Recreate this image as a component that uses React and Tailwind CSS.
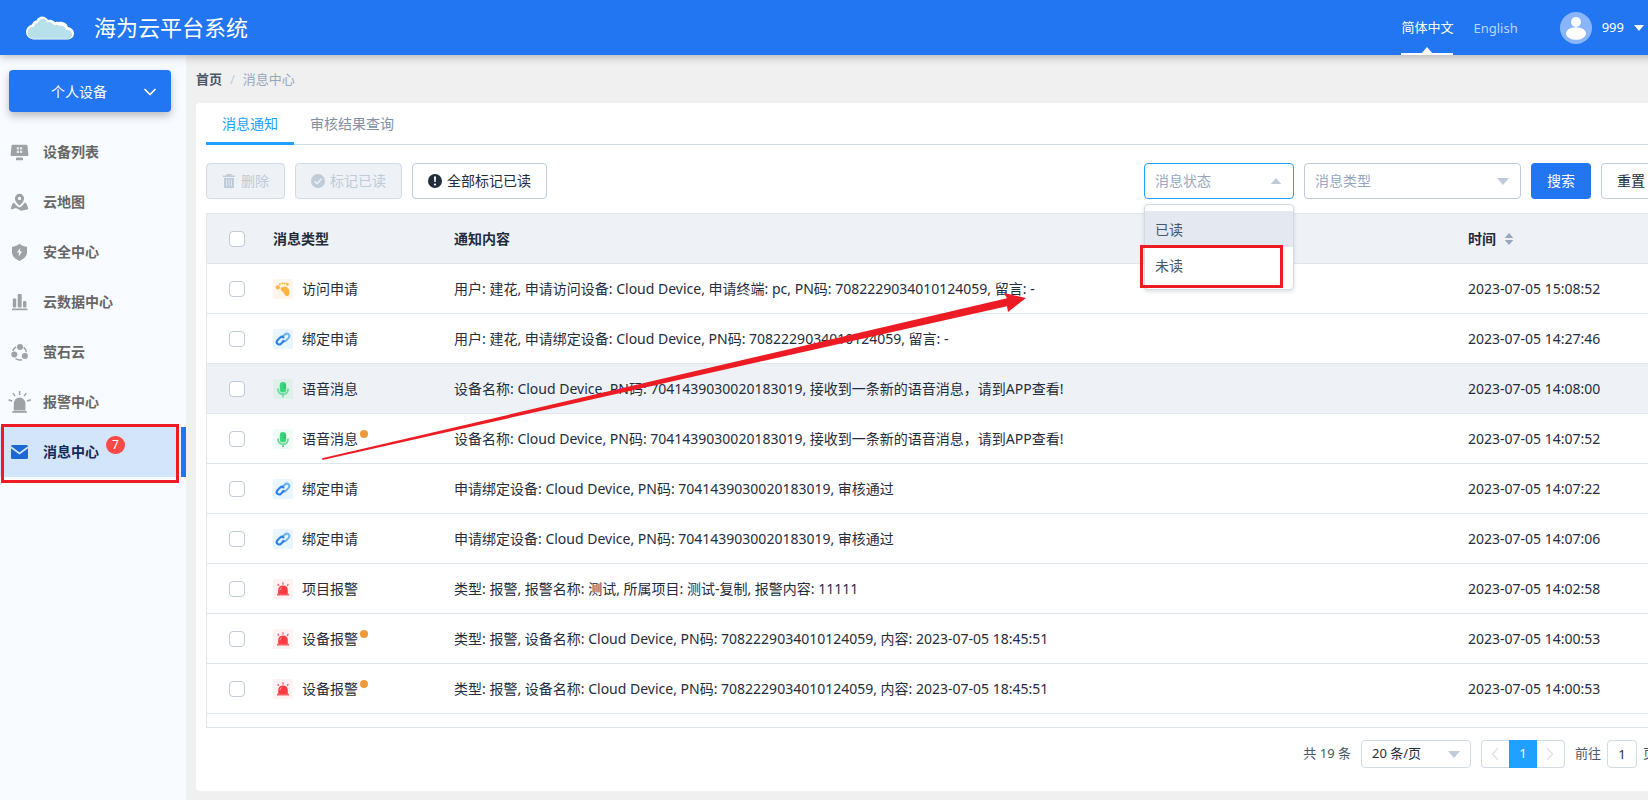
import React from "react";

const NAV = [
  { label: "设备列表", icon: "device" },
  { label: "云地图", icon: "map" },
  { label: "安全中心", icon: "shield" },
  { label: "云数据中心", icon: "chart" },
  { label: "萤石云", icon: "share" },
  { label: "报警中心", icon: "alarm" },
  { label: "消息中心", icon: "mail", active: true, badge: 7 },
];

const VISIT = "访问申请";
const BIND = "绑定申请";
const VOICE = "语音消息";
const PROJECT = "项目报警";
const DEVICE = "设备报警";

const ROWS = [
  { id: 1, type: VISIT, text: "用户: 建花, 申请访问设备: Cloud Device, 申请终端: pc, PN码: 7082229034010124059, 留言: -", time: "2023-07-05 15:08:52" },
  { id: 2, type: BIND, text: "用户: 建花, 申请绑定设备: Cloud Device, PN码: 7082229034010124059, 留言: -", time: "2023-07-05 14:27:46" },
  { id: 3, type: VOICE, text: "设备名称: Cloud Device, PN码: 7041439030020183019, 接收到一条新的语音消息，请到APP查看!", time: "2023-07-05 14:08:00", hover: true },
  { id: 4, type: VOICE, text: "设备名称: Cloud Device, PN码: 7041439030020183019, 接收到一条新的语音消息，请到APP查看!", time: "2023-07-05 14:07:52", unread: true },
  { id: 5, type: BIND, text: "申请绑定设备: Cloud Device, PN码: 7041439030020183019, 审核通过", time: "2023-07-05 14:07:22" },
  { id: 6, type: BIND, text: "申请绑定设备: Cloud Device, PN码: 7041439030020183019, 审核通过", time: "2023-07-05 14:07:06" },
  { id: 7, type: PROJECT, text: "类型: 报警, 报警名称: 测试, 所属项目: 测试-复制, 报警内容: 11111", time: "2023-07-05 14:02:58" },
  { id: 8, type: DEVICE, text: "类型: 报警, 设备名称: Cloud Device, PN码: 7082229034010124059, 内容: 2023-07-05 18:45:51", time: "2023-07-05 14:00:53", unread: true },
  { id: 9, type: DEVICE, text: "类型: 报警, 设备名称: Cloud Device, PN码: 7082229034010124059, 内容: 2023-07-05 18:45:51", time: "2023-07-05 14:00:53", unread: true },
];

function NavIcon({ name }) {
  const common = { viewBox: "0 0 24 24", className: "h-6 w-6 shrink-0", "aria-hidden": true };
  switch (name) {
    case "device":
      return (
        <svg {...common} fill="#a0a1a5">
          <path d="M4.700 4.800h13.600a1.200 1.200 0 0 1 1.200 1.100l.9 8.900a1.200 1.200 0 0 1-1.200 1.300H3.800a1.200 1.200 0 0 1-1.200-1.300l.9-8.900a1.200 1.200 0 0 1 1.200-1.100z" />
          <path d="M9.500 17.600h4c.8 0 1.500.4 1.500 1v1.600H8v-1.600c0-.6.7-1 1.500-1z" />
          <path d="M8.800 7.300h2.200v2.200H8.800zM12 7.300h2.200v2.200H12zM8.800 10.700h2.200v2.200H8.800zM12 10.700h2.200v2.200H12z" fill="#e9ebef" />
        </svg>
      );
    case "map":
      return (
        <svg {...common} fill="#a0a1a5">
          <path fillRule="evenodd" d="M11.500 3.800A4.600 4.600 0 0 0 6.900 8.400c0 3 4.600 7.300 4.600 7.300s4.600-4.300 4.600-7.300a4.600 4.600 0 0 0-4.600-4.600zm0 2.900a1.700 1.700 0 1 1 0 3.400 1.700 1.700 0 0 1 0-3.400z" />
          <path d="M6.200 12.800l-1.700.6L2.900 18c-.3 1 .5 1.700 1.400 1.300l3.600-1.400 4.800 2.500c.5.300 1 .3 1.500.1l5-1c.9-.2 1.200-.8.9-1.600l-1.600-4.400-1.800-.9c-1.200 2.200-3.200 4.100-5.200 5-2-.9-4-2.700-5.300-4.800z" />
        </svg>
      );
    case "shield":
      return (
        <svg {...common}>
          <path d="M11.500 3.800c2 1.700 4.700 2.800 7.500 3v5.700c0 3.700-3 6.400-7.500 8.500-4.500-2.100-7.500-4.800-7.500-8.500V6.800c2.800-.2 5.500-1.300 7.500-3z" fill="#a0a1a5" />
          <path d="M12.300 8l-3.500 4.600h2.300l-.5 4 3.700-5H12z" fill="#f8fbff" />
        </svg>
      );
    case "chart":
      return (
        <svg {...common} fill="#a0a1a5">
          <rect x="4.800" y="8.500" width="3.400" height="9" rx="1" />
          <rect x="9.700" y="4" width="4" height="13.500" rx="1" />
          <rect x="15" y="11" width="3.400" height="6.500" rx="1" />
          <rect x="4" y="18.400" width="15.500" height="1.800" rx=".5" />
        </svg>
      );
    case "share":
      return (
        <svg {...common} fill="#a0a1a5">
          <circle cx="12" cy="7" r="3" />
          <circle cx="6.300" cy="14.600" r="3" />
          <circle cx="16.900" cy="16" r="3" />
          <path d="M8 6.800A7.600 7.600 0 0 0 4.800 11M15.600 7.200a7.600 7.600 0 0 1 2.700 5M7.500 18.700a7.600 7.600 0 0 0 6.500 1" fill="none" stroke="#a0a1a5" strokeWidth="1.500" />
        </svg>
      );
    case "alarm":
      return (
        <svg {...common} fill="#a0a1a5">
          <path d="M11.600 7.500a5.800 5.800 0 0 1 5.800 5.800V20.500H5.800v-7.200a5.800 5.800 0 0 1 5.800-5.800z" />
          <rect x="4.400" y="21" width="14.400" height="1.800" />
          <path d="M11.600 1v4M5 3.200l2 3M18.200 3.200l-2 3M.4 9.800l3.800 1.200M22.800 9.800L19 11" stroke="#a0a1a5" strokeWidth="1.500" />
        </svg>
      );
    default:
      return (
        <svg {...common}>
          <rect x="3" y="5" width="17" height="14" rx="1.500" fill="#1e68d6" />
          <path d="M3 7.200l8.500 6.300L20 7.200" fill="none" stroke="#d2e5fb" strokeWidth="1.700" />
        </svg>
      );
  }
}

function TypeIcon({ type }) {
  if (type === VISIT) {
    return (
      <svg viewBox="0 0 20 20" className="h-5 w-5 shrink-0" aria-hidden="true">
        <rect width="20" height="20" rx="1.500" fill="#fef6ea" />
        <g fill="#fdb441">
          <circle cx="4.800" cy="8.400" r="2.100" />
          <circle cx="6.900" cy="5.300" r="1" />
          <circle cx="9.300" cy="4.600" r="1" />
          <circle cx="11.800" cy="4.500" r="1.100" />
          <circle cx="14.400" cy="5.300" r="1.400" />
          <path d="M8.500 8.300c2.600-1.600 6-.8 7.200 2 1.100 2.600 1.100 6.200-1.400 6.700-2.300.4-2.300-1.900-3.600-3.100-1.700-1.500-4.300-3.900-2.200-5.600z" />
        </g>
      </svg>
    );
  }
  if (type === BIND) {
    return (
      <svg viewBox="0 0 20 20" className="h-5 w-5 shrink-0" aria-hidden="true">
        <rect width="20" height="20" rx="1.500" fill="#e9f6ff" />
        <g fill="none" strokeWidth="2.100" strokeLinecap="round">
          <path d="M9.200 8.300l2.600-2.700c2.700-2.400 6 .6 3.800 3.300l-2.800 2.800c-1 .9-2.200 1-3.200.3" stroke="#6fb1f7" />
          <path d="M10.800 11.900l-2.700 2.700c-2.600 2.300-5.900-.6-3.700-3.300l2.800-2.800c1-.9 2.400-.9 3.300 0" stroke="#2b82ee" />
        </g>
      </svg>
    );
  }
  if (type === VOICE) {
    return (
      <svg viewBox="0 0 20 20" className="h-5 w-5 shrink-0" aria-hidden="true">
        <rect width="20" height="20" rx="1.500" fill="#3bd57c" fillOpacity=".08" />
        <rect x="6.800" y="3" width="6.400" height="10.500" rx="3.200" fill="#3bd57c" />
        <path d="M4.900 9.500c0 3.700 2.200 5.700 5.100 5.700s5.100-2 5.100-5.700M10 15v3.200" fill="none" stroke="#6cdc9b" strokeWidth="1.800" />
        <path d="M10 6.200h3M10 8.500h3" stroke="#2fae62" strokeWidth=".8" />
      </svg>
    );
  }
  return (
    <svg viewBox="0 0 20 20" className="h-5 w-5 shrink-0" aria-hidden="true">
      <rect width="20" height="20" rx="1.500" fill="#fff2f2" />
      <path d="M10 6.500c3 0 4.800 2 4.800 4.600V15H5.200v-3.900C5.200 8.500 7 6.500 10 6.500z" fill="#ff3b42" />
      <rect x="4" y="14.800" width="12" height="1.700" fill="#ff5c62" />
      <path d="M10 3.300v2.400M4.700 4.800l1.100 2M15.300 4.800l-1.100 2" stroke="#ff6b70" strokeWidth="1.400" />
      <path d="M7 11.200c0-1.400.7-2.200 1.900-2.600" fill="none" stroke="#ffc4c6" strokeWidth=".8" />
    </svg>
  );
}

function Caret({ up = false, className = "" }) {
  return (
    <svg viewBox="0 0 12 7" className={className} fill="currentColor" aria-hidden="true">
      <path d={up ? "M0 7L6 0l6 7z" : "M0 0l6 7 6-7z"} />
    </svg>
  );
}

function Checkbox({ label }) {
  return (
    <input
      type="checkbox"
      aria-label={label}
      className="block h-4 w-4 appearance-none rounded border border-[#bfcbd9] bg-white checked:bg-[#20a0ff]"
    />
  );
}

function Header() {
  return (
    <header className="relative z-10 flex h-[55px] shrink-0 items-center bg-[#2276f2] pl-[26px] pr-[37px] text-white shadow-[0_2px_8px_rgba(0,0,0,0.25)]">
      <svg viewBox="0 0 48 24" className="h-6 w-12" aria-hidden="true">
        <path d="M7.500 23.500A7.500 7.500 0 0 1 0 16.200C0 12.200 2.800 9.500 6 8.500 7 5.800 8.500 4.800 10.500 4.500 12 1.500 14 .5 16 .5c2.600 0 4.700 1.300 6 3.500 2.800-.7 5.500 0 7 2.300 1.500-.6 2.700-.6 4 0 0-.5 3-1 5 .2 2 1 3.500 2.300 3.800 4.600 3.700.7 6.200 2.900 6.200 6.400a6 6 0 0 1-6 6z" fill="#fff" />
        <path d="M8 22.800c-3.800 0-6.200-2.500-6.200-6 0-3.300 2.600-5.800 6-6 .6-2.700 2-3.800 4.200-3.900.9-2.600 2.400-4 4.800-4 2.300 0 4 1.400 4.800 3.600 3-.9 5.700.5 6.600 3 1.800-1.200 3.600-1 5 .5 3.300-1 6.200.8 6.600 3.700 3.500.2 6.400 2 6.400 4.900 0 2.600-2 4.200-4.700 4.200z" fill="#b8e0ea" />
      </svg>
      <h1 className="ml-5 text-[22px]">海为云平台系统</h1>
      <nav className="ml-auto flex h-full items-center gap-5 text-[13px]" aria-label="语言">
        <a href="#zh" className="relative flex h-full items-center border-b-2 border-white pt-[2px]">
          简体中文
          <Caret up className="absolute bottom-0 left-5 h-[6px] w-3" />
        </a>
        <a href="#en" className="pt-[2px] text-[#bdd6fb]">English</a>
      </nav>
      <button type="button" className="ml-[42px] flex items-center text-[13px]">
        <svg viewBox="0 0 32 32" className="mr-[10px] h-8 w-8" aria-hidden="true">
          <circle cx="16" cy="16" r="16" fill="#8ab5fb" />
          <circle cx="16" cy="10" r="5" fill="#fff" />
          <ellipse cx="16" cy="21.500" rx="10" ry="6.300" fill="#fff" />
        </svg>
        999
        <Caret className="ml-[10px] h-[6px] w-[10px]" />
      </button>
    </header>
  );
}

function Sidebar() {
  return (
    <aside className="w-[186px] shrink-0 bg-[#f8fbff]">
      <div className="pl-[9px] pr-[15px] pt-[15px]">
        <button type="button" className="flex h-[42px] w-full items-center rounded bg-[#2276f2] pl-[42px] pr-[14px] pt-[2px] text-sm text-white shadow-[0_4px_8px_rgba(0,0,0,0.25)]">
          个人设备
          <svg viewBox="0 0 14 14" className="ml-auto h-[14px] w-[14px]" fill="none" stroke="currentColor" strokeWidth="1.600" aria-hidden="true">
            <path d="M1.500 4L7 9.500 12.500 4" />
          </svg>
        </button>
      </div>
      <nav className="mt-[15px]" aria-label="主导航">
        {NAV.map((item) => (
          <a
            key={item.label}
            href={"#" + item.icon}
            className={"relative flex h-[50px] gap-[2px] text-sm font-bold " + (item.active ? "text-[#14285a]" : "text-[#666]")}
          >
            <span className={"flex flex-1 items-center pl-2 " + (item.active ? "bg-[#d2e5fb]" : "")}>
              <NavIcon name={item.icon} />
              <span className="ml-[11px]">{item.label}</span>
              {item.badge && (
                <span className="mb-[14px] ml-[7px] flex h-[18px] w-[19px] items-center justify-center rounded-full bg-[#ff4949] text-xs font-normal text-white">
                  {item.badge}
                </span>
              )}
            </span>
            {item.active && <span className="w-[5px] bg-[#2276f2]" />}
            {item.active && <span className="absolute -bottom-[6px] -top-[3px] left-px w-[178px] border-[3px] border-[#ed1c24]" />}
          </a>
        ))}
      </nav>
    </aside>
  );
}

function Toolbar() {
  return (
    <div className="mt-[18px] flex items-center gap-[10px] text-sm text-[#1f2d3d]">
      <button type="button" disabled className="flex h-9 items-center gap-[5px] rounded border border-[#d1dbe5] bg-[#eef1f6] px-[15px] text-[#bfcbd9]">
        <svg viewBox="0 0 14 16" className="h-4 w-[14px]" fill="currentColor" aria-hidden="true">
          <path d="M4.500 1h5v1.500H13V4H1V2.500h3.500z" />
          <path fillRule="evenodd" d="M2 5h10v9a1 1 0 0 1-1 1H3a1 1 0 0 1-1-1zm2.200 1.500v6.800h.7V6.500zm2.450 0v6.800h.7V6.500zm2.450 0v6.800h.7V6.500z" />
        </svg>
        删除
      </button>
      <button type="button" disabled className="flex h-9 items-center gap-[5px] rounded border border-[#d1dbe5] bg-[#eef1f6] px-[15px] text-[#bfcbd9]">
        <svg viewBox="0 0 14 14" className="h-[14px] w-[14px]" aria-hidden="true">
          <circle cx="7" cy="7" r="7" fill="currentColor" />
          <path d="M3.500 7.200l2.500 2.500 4.500-5" fill="none" stroke="#eef1f6" strokeWidth="1.500" />
        </svg>
        标记已读
      </button>
      <button type="button" className="flex h-9 items-center gap-[5px] rounded border border-[#c0ccda] bg-white px-[15px]">
        <svg viewBox="0 0 14 14" className="h-[14px] w-[14px]" aria-hidden="true">
          <circle cx="7" cy="7" r="7" fill="currentColor" />
          <path d="M6 2.500h2L7.700 8H6.300z" fill="#fff" />
          <circle cx="7" cy="10.500" r="1.100" fill="#fff" />
        </svg>
        全部标记已读
      </button>

      <div className="relative ml-auto w-[150px]">
        <select aria-label="消息状态" className="block h-9 w-full appearance-none rounded border border-[#20a0ff] bg-white px-[10px] text-[#97a8be] outline-none">
          <option>消息状态</option>
          <option>已读</option>
          <option>未读</option>
        </select>
        <Caret up className="pointer-events-none absolute right-3 top-[15px] h-[6px] w-3 text-[#bfcbd9]" />
        <ul className="absolute left-0 top-[41px] z-10 w-full rounded-sm border border-[#d1dbe5] bg-white py-[6px] text-[#48576a] shadow-[0_2px_4px_rgba(0,0,0,0.12)]">
          <li className="flex h-9 items-center bg-[#e4e8f1] px-[10px] pt-[2px]">已读</li>
          <li className="relative flex h-9 items-center px-[10px] pt-[2px]">
            未读
            <span className="absolute -bottom-[5px] -left-[5px] -top-[2px] w-[143px] border-[3px] border-[#ed1c24]" />
          </li>
        </ul>
      </div>
      <div className="relative w-[217px]">
        <select aria-label="消息类型" className="block h-9 w-full appearance-none rounded border border-[#bfcbd9] bg-white px-[10px] text-[#97a8be]">
          <option>消息类型</option>
          <option>{VISIT}</option>
          <option>{BIND}</option>
          <option>{VOICE}</option>
        </select>
        <Caret className="pointer-events-none absolute right-3 top-[15px] h-[7px] w-3 text-[#bfcbd9]" />
      </div>
      <button type="button" className="h-9 w-[60px] rounded bg-[#2276f2] text-white">搜索</button>
      <button type="button" className="h-9 w-[60px] rounded border border-[#c0ccda] bg-white">重置</button>
    </div>
  );
}

function MessageTable() {
  return (
    <div className="relative mt-[14px] border border-[#dfe6ec] pb-[13px]">
      <table className="w-full table-fixed border-separate border-spacing-0 text-left text-sm text-[#1f2d3d]">
        <thead>
          <tr className="h-[50px] bg-[#eef1f6]">
            <th className="w-12 border-b border-[#dfe6ec] pl-[22px]"><Checkbox label="全选" /></th>
            <th className="w-[181px] border-b border-[#dfe6ec] px-[18px]">消息类型</th>
            <th className="border-b border-[#dfe6ec] px-[18px]">通知内容</th>
            <th className="w-[210px] border-b border-[#dfe6ec] px-[18px]">
              <button type="button" className="flex items-center gap-2 font-bold">
                时间
                <span className="flex flex-col gap-[2px] text-[#97a8be]">
                  <Caret up className="h-[5px] w-[10px]" />
                  <Caret className="h-[5px] w-[10px]" />
                </span>
              </button>
            </th>
          </tr>
        </thead>
        <tbody>
          {ROWS.map((row) => (
            <tr key={row.id} className={row.hover ? "h-[50px] bg-[#eef1f6]" : "h-[50px]"}>
              <td className="border-b border-[#dfe6ec] pl-[22px]"><Checkbox label={row.type + " " + row.time} /></td>
              <td className="border-b border-[#dfe6ec] px-[18px]">
                <div className="flex items-center">
                  <TypeIcon type={row.type} />
                  <span className="ml-[9px]">{row.type}</span>
                  {row.unread && <span className="mb-[10px] ml-[2px] h-2 w-2 rounded-full bg-[#ec9a3c]" />}
                </div>
              </td>
              <td className="border-b border-[#dfe6ec] px-[18px]">{row.text}</td>
              <td className="border-b border-[#dfe6ec] px-[18px]">{row.time}</td>
            </tr>
          ))}
        </tbody>
      </table>
      <svg viewBox="0 0 706 170" className="pointer-events-none absolute left-[115px] top-[78px] h-[170px] w-[706px]" fill="#ed1c24" aria-hidden="true">
        <path d="M0 166.300L685 6.300 682 1 704 6 686 20 685 14.300 0.500 168z" />
      </svg>
    </div>
  );
}

function Pagination() {
  return (
    <div className="mt-3 flex h-7 items-center justify-end pr-[5px] text-[13px] text-[#48576a]">
      <span>共 19 条</span>
      <div className="relative ml-[10px] w-[110px]">
        <select aria-label="每页条数" className="block h-7 w-full appearance-none rounded-sm border border-[#d1dbe5] bg-white px-[10px] text-[#1f2d3d]">
          <option>20 条/页</option>
          <option>50 条/页</option>
        </select>
        <Caret className="pointer-events-none absolute right-[11px] top-[11px] h-[7px] w-3 text-[#bfcbd9]" />
      </div>
      <div className="ml-[10px] flex h-7 w-[84px]">
        <button type="button" disabled aria-label="上一页" className="flex w-7 items-center justify-center rounded-l-sm border border-r-0 border-[#d1dbe5] text-[#e4e4e4]">
          <svg viewBox="0 0 8 14" className="h-[14px] w-2" fill="none" stroke="currentColor" strokeWidth="1.500" aria-hidden="true"><path d="M7 1L1.500 7 7 13" /></svg>
        </button>
        <button type="button" className="w-7 bg-[#20a0ff] text-white">1</button>
        <button type="button" disabled aria-label="下一页" className="flex w-7 items-center justify-center rounded-r-sm border border-l-0 border-[#d1dbe5] text-[#e4e4e4]">
          <svg viewBox="0 0 8 14" className="h-[14px] w-2" fill="none" stroke="currentColor" strokeWidth="1.500" aria-hidden="true"><path d="M1 1l5.500 6L1 13" /></svg>
        </button>
      </div>
      <label className="ml-[10px] flex items-center gap-[6px]">
        前往
        <input defaultValue="1" className="h-7 w-[30px] rounded-sm border border-[#d1dbe5] text-center text-[#1f2d3d]" />
        页
      </label>
    </div>
  );
}

export default function App() {
  return (
    <div className="overflow-hidden font-['Noto_Sans','Noto_Sans_CJK_SC',sans-serif]">
      <div className="flex min-h-screen min-w-[1681px] flex-col">
        <Header />
        <div className="flex flex-1 bg-[#f0f0f0]">
          <Sidebar />
          <main className="flex min-w-0 flex-1 flex-col px-[10px] pb-[9px]">
            <nav className="flex h-12 items-center gap-2 pt-[2px] text-[13px] text-[#97a8be]" aria-label="面包屑">
              <a href="#home" className="font-bold text-[#48576a]">首页</a>
              <span className="text-[#bfcbd9]">/</span>
              <span>消息中心</span>
            </nav>
            <section className="flex-1 rounded bg-white px-[10px]">
              <div className="flex h-[42px] border-b border-[#d1dbe5] text-sm">
                <button type="button" className="-mb-px h-[42px] border-b-[3px] border-[#20a0ff] px-4 pt-[2px] text-[#20a0ff]">消息通知</button>
                <button type="button" className="h-[41px] px-4 text-[#8391a5]">审核结果查询</button>
              </div>
              <Toolbar />
              <MessageTable />
              <Pagination />
            </section>
          </main>
        </div>
      </div>
    </div>
  );
}
